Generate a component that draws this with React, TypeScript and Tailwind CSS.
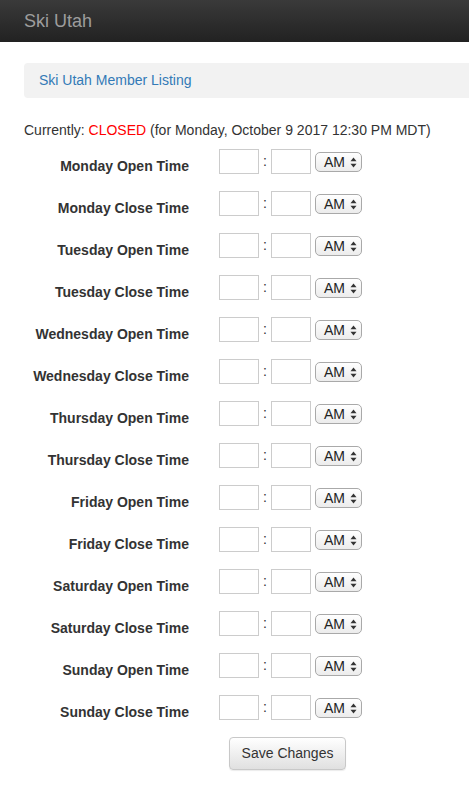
import React from "react";

const days = ["Monday", "Tuesday", "Wednesday", "Thursday", "Friday", "Saturday", "Sunday"];

function Arrows() {
  return (
    <svg width="7" height="11" viewBox="0 0 7 11" className="ml-[5px]">
      <path d="M3.5 0.5 L6.5 4.3 L0.5 4.3 Z" fill="#333" />
      <path d="M3.5 10.5 L6.5 6.7 L0.5 6.7 Z" fill="#333" />
    </svg>
  );
}

function Row({ label }: { label: string }) {
  return (
    <div className="flex items-start h-[42px]">
      <div className="w-[165px] text-right pt-[7px] text-[14px] leading-[20px] font-bold text-[#333]">{label}</div>
      <div className="ml-[30px] w-[40px] h-[25px] border border-[#ccc] bg-white" />
      <div className="w-[12px] h-[25px] flex items-center justify-center text-[14px] text-[#333]">:</div>
      <div className="w-[40px] h-[25px] border border-[#ccc] bg-white" />
      <div className="ml-[4px] mt-[3px] w-[47px] h-[20px] flex items-center pl-[8px] border border-[#a9a9a9] rounded-[5px] bg-gradient-to-b from-[#ffffff] to-[#ececec] text-[14px] leading-[18px] text-[#222]">
        <span>AM</span>
        <Arrows />
      </div>
    </div>
  );
}

export default function App() {
  return (
    <div className="w-[469px] min-h-[800px] bg-white overflow-hidden" style={{ fontFamily: '"Liberation Sans", Arial, sans-serif' }}>
      <div className="h-[42px] bg-gradient-to-b from-[#3a3a3a] to-[#222222] flex items-center pl-[24px] pb-[1px]">
        <span className="text-[18px] text-[#9d9d9d] leading-[20px]">Ski Utah</span>
      </div>
      <div className="pl-[24px]">
        <div className="mt-[21px] h-[35px] w-[460px] bg-[#f2f2f2] rounded-[4px] flex items-center pl-[15px]">
          <span className="text-[14px] text-[#337ab7]">Ski Utah Member Listing</span>
        </div>
        <div className="mt-[22px] text-[14px] leading-[20px] text-[#333]">
          Currently: <span className="text-[#ff0000]">CLOSED</span> (for Monday, October 9 2017 12:30 PM MDT)
        </div>
        <div className="mt-[9px] flex flex-col">
          {days.flatMap((d) => [
            <Row key={d + "o"} label={`${d} Open Time`} />,
            <Row key={d + "c"} label={`${d} Close Time`} />,
          ])}
        </div>
        <div className="ml-[205px]">
          <button className="w-[117px] h-[33px] border border-[#c8c8c8] rounded-[4px] bg-gradient-to-b from-[#ffffff] to-[#e0e0e0] text-[14px] text-[#333] shadow-[0_1px_1px_rgba(0,0,0,0.08)]">
            Save Changes
          </button>
        </div>
      </div>
    </div>
  );
}
